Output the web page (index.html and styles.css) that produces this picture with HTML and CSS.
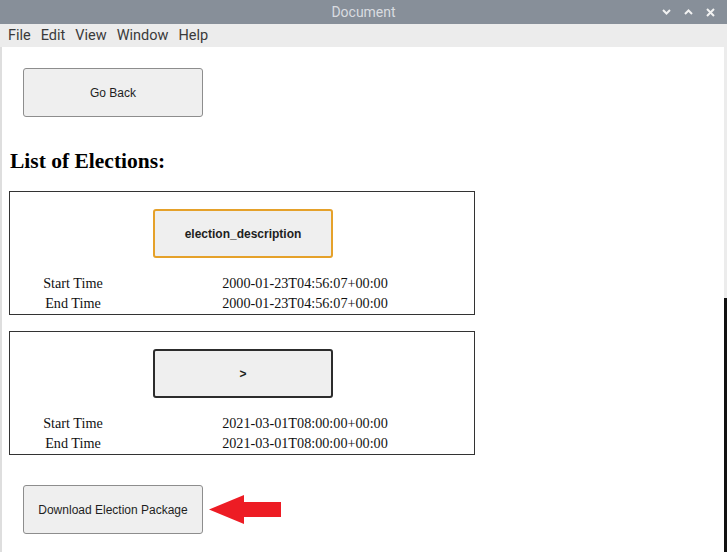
FILE: index.html
```html
<!DOCTYPE html>
<html>
<head>
<meta charset="utf-8">
<title>Document</title>
<link rel="stylesheet" href="styles.css">
</head>
<body>
<div class="window">
  <div class="titlebar">
    <span class="title">Document</span>
    <div class="controls">
      <svg class="ctl" width="9" height="6" viewBox="0 0 9 6"><path d="M1 1 L4.5 4.5 L8 1" fill="none" stroke="#f2f2f2" stroke-width="2"/></svg>
      <svg class="ctl" width="9" height="6" viewBox="0 0 9 6"><path d="M1 5 L4.5 1.5 L8 5" fill="none" stroke="#f2f2f2" stroke-width="2"/></svg>
      <svg class="ctl" width="9" height="9" viewBox="0 0 9 9"><path d="M1 1 L8 8 M8 1 L1 8" fill="none" stroke="#f2f2f2" stroke-width="2"/></svg>
    </div>
  </div>
  <div class="menubar">
    <span>File</span><span>Edit</span><span>View</span><span>Window</span><span>Help</span>
  </div>
  <div class="body">
    <div class="edge-left"></div>
    <main class="page">
      <button class="btn btn-back">Go Back</button>
      <h2 class="heading">List of Elections:</h2>
      <section class="election">
        <button class="btn btn-election focus-orange">election_description</button>
        <div class="times">
          <span>Start Time</span><span>2000-01-23T04:56:07+00:00</span>
          <span>End Time</span><span>2000-01-23T04:56:07+00:00</span>
        </div>
      </section>
      <section class="election">
        <button class="btn btn-election focus-dark">&gt;</button>
        <div class="times">
          <span>Start Time</span><span>2021-03-01T08:00:00+00:00</span>
          <span>End Time</span><span>2021-03-01T08:00:00+00:00</span>
        </div>
      </section>
      <div class="download-row">
        <button class="btn btn-download">Download Election Package</button>
        <svg class="arrow" width="73" height="30" viewBox="0 0 73 30"><path d="M0 14.5 L35 0 L35 7 L72 7 L72 22 L35 22 L35 29 Z" fill="#ed1c24"/></svg>
      </div>
    </main>
    <div class="edge-right"></div>
  </div>
</div>
</body>
</html>
```
FILE: styles.css
```css
html, body {
  margin: 0;
  padding: 0;
  background: #ffffff;
}
.window {
  width: 727px;
  height: 552px;
  overflow: hidden;
  display: flex;
  flex-direction: column;
}
.titlebar {
  height: 24px;
  flex: none;
  background: #878f99;
  display: flex;
  align-items: center;
  justify-content: center;
  position: relative;
  font-family: Roboto, "Liberation Sans", sans-serif;
  font-size: 14px;
  color: #d9dce0;
}
.title {
  line-height: 24px;
}
.controls {
  position: absolute;
  right: 12px;
  top: 0;
  height: 24px;
  display: flex;
  align-items: center;
  gap: 13px;
}
.menubar {
  height: 23px;
  flex: none;
  background: #ececec;
  display: flex;
  align-items: center;
  gap: 10px;
  padding-left: 8px;
  font-family: Roboto, "Liberation Sans", sans-serif;
  font-size: 14.5px;
  color: #3a3a3a;
}
.body {
  flex: 1;
  display: flex;
}
.edge-left {
  width: 2px;
  background: #dedede;
}
.edge-right {
  width: 3px;
  background: linear-gradient(#ececec 0, #ececec 251px, #111 251px);
}
.page {
  flex: 1;
  padding-top: 21px;
  font-family: "Liberation Serif", serif;
}
.btn {
  display: block;
  width: 180px;
  height: 49px;
  background: #efefef;
  border: 1px solid #8d8d8d;
  border-radius: 3px;
  font-family: "Liberation Sans", Arial, sans-serif;
  font-size: 12px;
  color: #1e1e1e;
  padding: 0;
}
.btn-back {
  margin-left: 21px;
}
.heading {
  margin: 32px 0 17px 8px;
  font-size: 21.5px;
  font-weight: bold;
  line-height: normal;
  color: #000;
}
.election {
  width: 464px;
  margin-left: 7px;
  border: 1px solid #333;
  display: flex;
  flex-direction: column;
  align-items: center;
  padding-top: 17px;
  box-sizing: content-box;
  height: 105px;
}
.election + .election {
  margin-top: 16px;
}
.btn-election {
  font-weight: bold;
  margin-left: 2px;
  border-width: 2px;
}
.focus-orange {
  border-color: #e5a12a;
}
.focus-dark {
  border-color: #2c2c2c;
}
.times {
  margin-top: 15px;
  align-self: stretch;
  display: grid;
  grid-template-columns: 126px 1fr;
  font-size: 14.2px;
  line-height: 20px;
  color: #111;
  text-align: center;
}
.download-row {
  display: flex;
  align-items: center;
  gap: 6px;
  margin-top: 30px;
  margin-left: 21px;
}
.arrow {
  flex: none;
}
```
